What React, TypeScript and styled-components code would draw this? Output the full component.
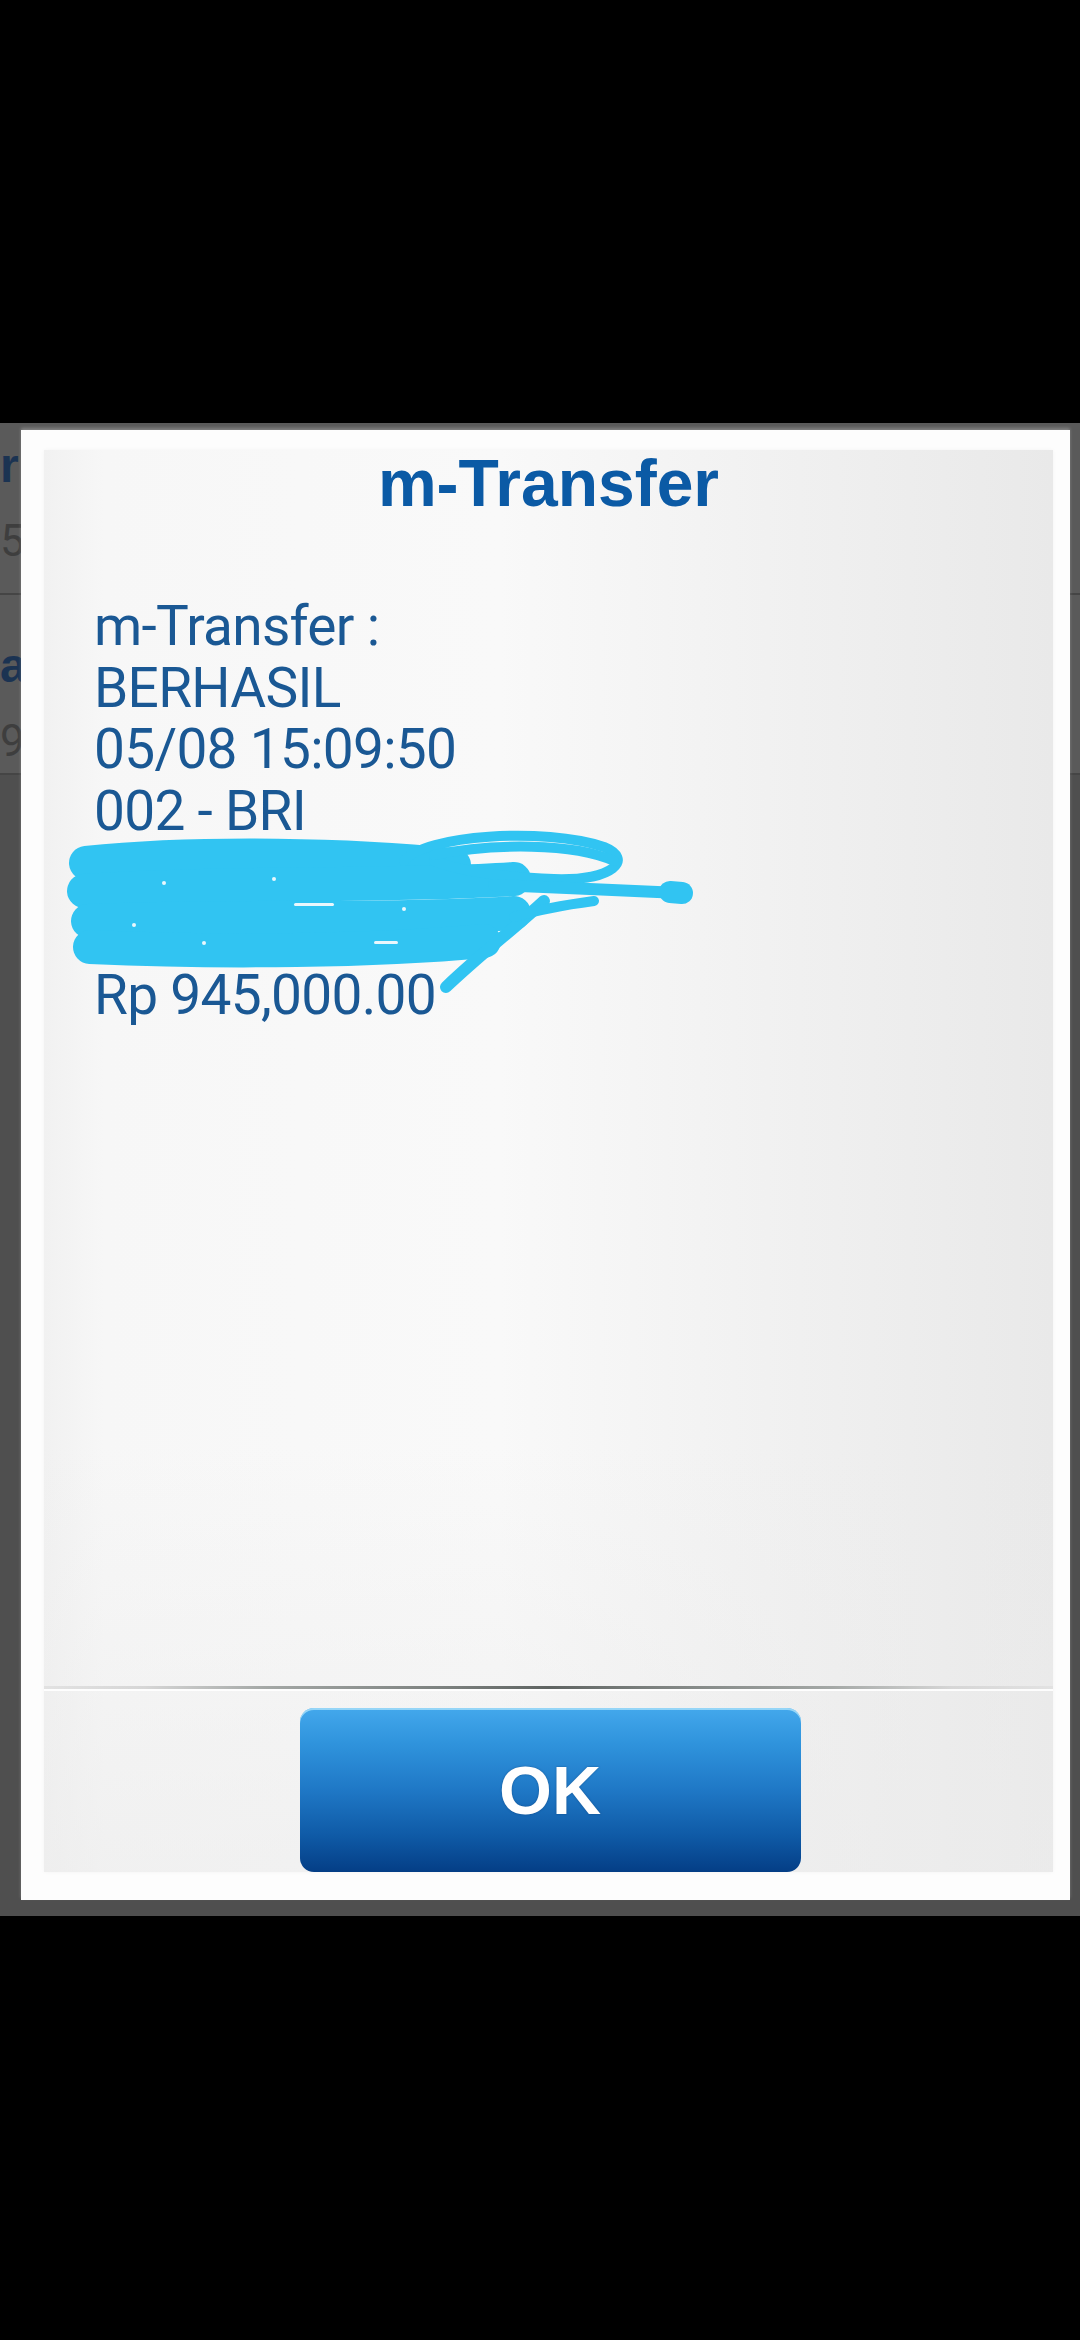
import React from "react";
import styled, { createGlobalStyle } from "styled-components";

const GlobalStyle = createGlobalStyle`
  html, body {
    margin: 0;
    padding: 0;
    background: #000;
  }
  body {
    width: 1080px;
    height: 2340px;
    overflow: hidden;
    font-family: Roboto, "Liberation Sans", sans-serif;
  }
`;

const Page = styled.div`
  display: flex;
  flex-direction: column;
  width: 1080px;
  height: 2340px;
  background: #000;
`;

const BlackBand = styled.div<{ $h: number }>`
  flex: 0 0 ${(p) => p.$h}px;
  background: #000;
`;

const Backdrop = styled.div`
  position: relative;
  flex: 0 0 1493px;
  display: flex;
  flex-direction: column;
  background: #4f4f4f;
  overflow: hidden;
`;

const BgRow = styled.div<{ $padTop: number; $h: number }>`
  box-sizing: border-box;
  height: ${(p) => p.$h}px;
  padding-top: ${(p) => p.$padTop}px;
  background: #5a5a5a;
  border-bottom: 2px solid #454545;
  display: flex;
  flex-direction: column;
  gap: 22px;
`;

const BgTitle = styled.span`
  white-space: nowrap;
  font-family: "Liberation Sans", Arial, sans-serif;
  font-weight: bold;
  font-size: 48px;
  line-height: 56px;
  color: #1b3352;
`;

const BgSub = styled.span`
  white-space: nowrap;
  font-family: Roboto, "Liberation Sans", sans-serif;
  font-size: 44px;
  line-height: 50px;
  color: #3e3e3e;
`;

const Dialog = styled.div`
  position: absolute;
  left: 21px;
  top: 7px;
  width: 1049px;
  height: 1470px;
  box-sizing: border-box;
  padding: 20px 17px 28px 23px;
  background: #fdfdfd;
  display: flex;
  box-shadow: 0 -2px 3px rgba(255, 255, 255, 0.25);
`;

const Panel = styled.div`
  flex: 1;
  display: flex;
  flex-direction: column;
  background:
    linear-gradient(to bottom, rgba(255,255,255,0) 0%, rgba(255,255,255,0) 70%, rgba(236,236,236,0.6) 100%),
    linear-gradient(to right, #f1f1f1 0%, #f7f7f7 6%, #f9f9f9 45%, #f0f0f0 75%, #e9e9e9 100%);
  box-shadow: 0 0 4px rgba(0, 0, 0, 0.04);
`;

const Title = styled.h1`
  margin: 0;
  text-align: center;
  font-family: "Liberation Sans", Arial, sans-serif;
  font-weight: bold;
  font-size: 66px;
  line-height: 66px;
  color: #0b5aa5;
`;

const Body = styled.div`
  position: relative;
  flex: 1;
  margin-top: 80px;
  padding-left: 50px;
  font-family: Roboto, "Liberation Sans", sans-serif;
  font-size: 55px;
  line-height: 61.5px;
  letter-spacing: -0.7px;
  color: #1a5894;
`;

const Line = styled.div`
  white-space: nowrap;
`;

const HiddenLine = styled.div`
  height: 61.5px;
`;

const Scribble = styled.svg`
  position: absolute;
  left: 30px;
  top: 225px;
  width: 620px;
  height: 170px;
  overflow: visible;
`;

const Separator = styled.div`
  height: 3px;
  background: linear-gradient(
    to right,
    #e2e2e2 0%,
    #d6d6d6 10%,
    #a4a8a6 22%,
    #7b807e 40%,
    #5f6462 50%,
    #7b807e 60%,
    #a4a8a6 78%,
    #d6d6d6 90%,
    #e2e2e2 100%
  );
  box-shadow: 0 2px 0 rgba(255, 255, 255, 0.9);
`;

const ButtonArea = styled.div`
  display: flex;
  justify-content: center;
  padding-top: 19px;
`;

const OkButton = styled.button`
  width: 501px;
  height: 164px;
  margin-left: 3px;
  border: none;
  border-radius: 14px;
  background: linear-gradient(
    to bottom,
    #43a8ec 0%,
    #2f93dc 22%,
    #1f78c6 50%,
    #0f5aa6 78%,
    #043e86 100%
  );
  box-shadow: inset 0 2px 0 rgba(170, 225, 250, 0.8);
  color: #fff;
  font-family: "Liberation Sans", Arial, sans-serif;
  font-weight: bold;
  font-size: 68px;
  text-shadow: 0 0 2px rgba(0, 40, 90, 0.5);
  padding: 0;
  cursor: pointer;
`;

const SCRIBBLE = "#31c4f2";

export default function App() {
  return (
    <>
      <GlobalStyle />
      <Page>
        <BlackBand $h={423} />
        <Backdrop>
          <BgRow $padTop={15} $h={172}>
            <BgTitle>r</BgTitle>
            <BgSub>5</BgSub>
          </BgRow>
          <BgRow $padTop={43} $h={180}>
            <BgTitle>ar</BgTitle>
            <BgSub>9</BgSub>
          </BgRow>

          <Dialog>
            <Panel>
              <Title>m-Transfer</Title>
              <Body>
                <Line>m-Transfer :</Line>
                <Line>BERHASIL</Line>
                <Line>05/08 15:09:50</Line>
                <Line>002 - BRI</Line>
                <HiddenLine />
                <HiddenLine />
                <Line>Rp 945,000.00</Line>
                <Scribble viewBox="0 0 620 170">
                  <g
                    fill="none"
                    stroke={SCRIBBLE}
                    strokeLinecap="round"
                    strokeLinejoin="round"
                  >
                    <path strokeWidth={34} d="M 12 42 C 130 30, 280 34, 380 44" />
                    <path strokeWidth={34} d="M 10 70 C 150 60, 330 66, 440 58" />
                    <path strokeWidth={34} d="M 14 100 C 160 94, 320 100, 440 92" />
                    <path strokeWidth={34} d="M 16 126 C 150 132, 300 130, 410 120" />
                    <path strokeWidth={10} d="M 330 40 C 350 14, 470 6, 530 26 C 560 38, 540 60, 480 58 C 420 56, 380 48, 360 40" />
                    <path strokeWidth={10} d="M 360 34 C 420 22, 500 22, 540 40" />
                    <path strokeWidth={12} d="M 420 64 C 480 66, 550 70, 606 72" />
                    <path strokeWidth={22} d="M 596 71 L 608 72" />
                    <path strokeWidth={12} d="M 470 80 C 440 108, 410 130, 372 166" />
                    <path strokeWidth={10} d="M 440 96 C 460 90, 490 84, 520 80" />
                  </g>
                  <g fill="#e9f7fd">
                    <circle cx="90" cy="62" r="2" />
                    <circle cx="200" cy="58" r="2" />
                    <circle cx="330" cy="88" r="2" />
                    <circle cx="60" cy="104" r="2" />
                    <circle cx="130" cy="122" r="2" />
                    <rect x="220" y="82" width="40" height="3" rx="1.5" />
                    <rect x="300" y="120" width="24" height="3" rx="1.5" />
                  </g>
                </Scribble>
              </Body>
              <Separator />
              <ButtonArea>
                <OkButton type="button">OK</OkButton>
              </ButtonArea>
            </Panel>
          </Dialog>
        </Backdrop>
        <BlackBand $h={424} />
      </Page>
    </>
  );
}
